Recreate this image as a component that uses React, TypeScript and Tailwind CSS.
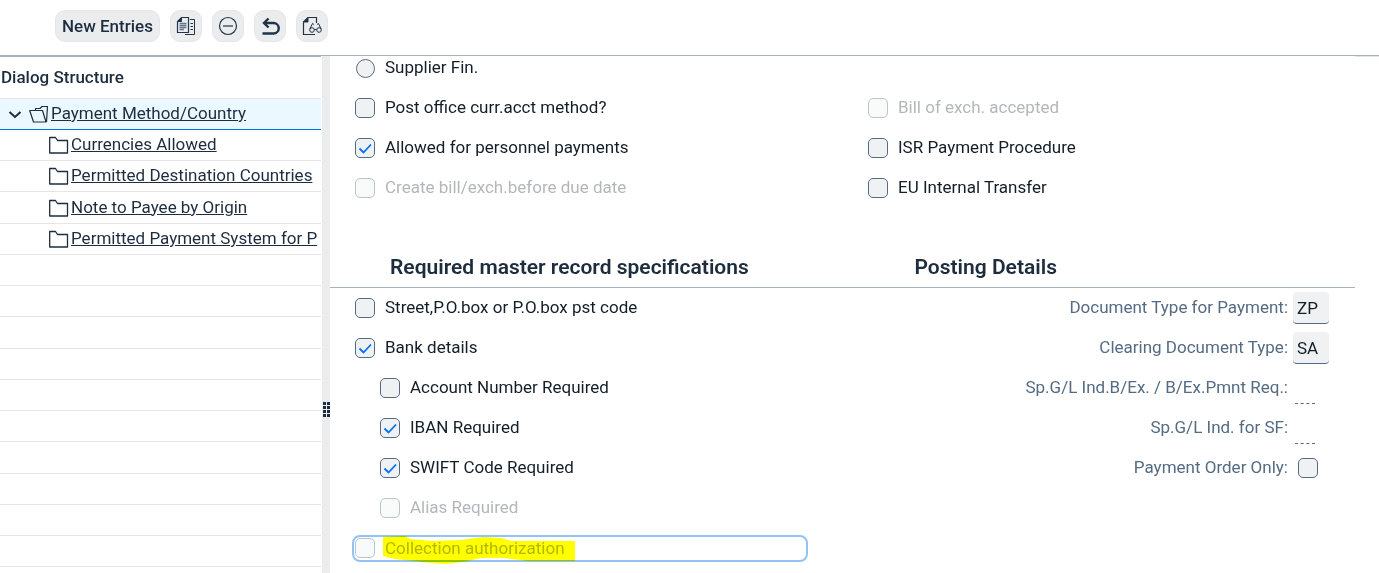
import { type ReactNode } from 'react';
import clsx from 'clsx';

const tree = [
  'Currencies Allowed',
  'Permitted Destination Countries',
  'Note to Payee by Origin',
  'Permitted Payment System for P',
];

// links first, then blank rows down to the bottom of the panel
const rows = Array.from({ length: 14 }, (_, i) => tree[i] ?? '');

type CheckProps = {
  id: string;
  label: string;
  checked?: boolean;
  disabled?: boolean;
  type?: 'checkbox' | 'radio';
};

function Box({ id, checked, disabled, type = 'checkbox' }: Omit<CheckProps, 'label'>) {
  return (
    <span className="grid size-5 shrink-0 place-items-center">
      <input
        id={id}
        type={type}
        defaultChecked={checked}
        disabled={disabled}
        className={clsx(
          'peer col-start-1 row-start-1 appearance-none border border-[#556b82] bg-[#eff1f2] disabled:border-[#bbc4cd] disabled:bg-[#f9fafa]',
          type === 'radio' ? 'size-[19px] rounded-full' : 'size-5 rounded-[5px]'
        )}
      />
      <svg viewBox="0 0 20 20" className="pointer-events-none invisible col-start-1 row-start-1 size-5 peer-checked:visible">
        <path d="M4.500 10.500L8.500 14.500L16 6.500" fill="none" stroke="#0070ff" strokeWidth="1.8" />
      </svg>
    </span>
  );
}

function Check(props: CheckProps) {
  return (
    <div className="flex h-10 items-center gap-[10px]">
      <Box {...props} />
      <label htmlFor={props.id} className={clsx('pb-[2px]', props.disabled ? 'text-[#b3b7bb]' : 'text-[#131e29]')}>
        {props.label}
      </label>
    </div>
  );
}

function ToolButton({ label, children }: { label: string; children: ReactNode }) {
  return (
    <button aria-label={label} className="grid h-8 w-8 place-items-center rounded-[10px] border border-[#e4e6e9] bg-[#eaecee] text-[#223548]">
      {children}
    </button>
  );
}

function Field({ id, label, children }: { id: string; label: string; children: ReactNode }) {
  return (
    <div className="flex h-10 items-center justify-end gap-[5px]">
      <label htmlFor={id} className="pb-[2px] text-[#556b82]">{label}</label>
      <div className="flex w-[62px] items-center">{children}</div>
    </div>
  );
}

function TypeInput({ id, value }: { id: string; value: string }) {
  return (
    <input
      id={id}
      defaultValue={value}
      className="h-8 w-9 rounded-[4px] border-b border-[#556b82] bg-[#eff1f2] px-1 text-[#131e29]"
    />
  );
}

export default function App() {
  return (
    <div className="flex h-screen flex-col overflow-hidden bg-white font-[Roboto,sans-serif] text-[17px] leading-5 text-[#1d2d3e]">
      <header className="flex h-[55px] shrink-0 items-center gap-[10px] pb-[3px] pl-[55px]">
        <button className="h-8 rounded-[10px] border border-[#e4e6e9] bg-[#eaecee] px-[6px] pb-px font-medium">New Entries</button>
        <ToolButton label="Copy">
          <svg viewBox="0 0 20 20" className="size-5" fill="none" stroke="currentColor">
            <path d="M5.500 1.500H12.500V16.500H1.500V5.500Z" strokeWidth="1.200" />
            <path d="M1.500 5.500H5.500V1.500Z" fill="currentColor" />
            <path d="M3.500 7.500H10.500M3.500 9.500H10.500M3.500 11.500H10.500M3.500 13.500H8" stroke="#66788a" strokeWidth="1.400" />
            <path d="M14 3.500H18.500V18.500H9" />
            <path d="M14.500 7.500H17M14.500 10.500H17M14.500 13.500H17" strokeWidth="1.200" />
          </svg>
        </ToolButton>
        <ToolButton label="Delete">
          <svg viewBox="0 0 20 20" className="size-5" fill="none" stroke="currentColor" strokeWidth="1.2">
            <circle cx="10" cy="10" r="8.500" />
            <path d="M5 10H15" />
          </svg>
        </ToolButton>
        <ToolButton label="Undo">
          <svg viewBox="0 0 20 20" className="size-5" fill="none" stroke="currentColor" strokeWidth="2.4">
            <path d="M8.500 2.500L4 7L8.500 11.500M4 7H13.500A5 5 0 0 1 13.500 17.500H2.500" />
          </svg>
        </ToolButton>
        <ToolButton label="Display">
          <svg viewBox="0 0 20 20" className="size-5" fill="none" stroke="currentColor">
            <path d="M14.500 7V1.500H6L1.500 6V18.500H13" strokeWidth="1.200" />
            <path d="M1.500 6H6V1.500Z" fill="currentColor" />
            <circle cx="10" cy="14" r="2.300" />
            <circle cx="17" cy="14" r="2.300" />
            <path d="M7.900 13L10.500 7.500L12 8.500M19.100 13L16.500 7.500L15 8.500M12.300 13.500H14.700" />
          </svg>
        </ToolButton>
      </header>

      <div className="flex min-h-0 flex-1 border-t border-[#a8b3bd]">
        <nav className="w-[321px] shrink-0 overflow-hidden border-t border-[#a8b3bd]">
          <h2 className="flex h-[42px] items-center border-b border-[#e5e5e5] pb-[2px] pl-px font-medium">Dialog Structure</h2>
          <div className="flex h-[31px] items-center border-b border-[#0070f2] bg-[#ebf8ff] pl-2">
            <svg viewBox="0 0 14 14" className="mr-[7px] size-[14px] shrink-0" fill="none" stroke="currentColor" strokeWidth="2">
              <path d="M1.500 5L7 10L12.500 5" />
            </svg>
            <svg viewBox="0 0 20 18" className="mr-[2px] h-[18px] w-5 shrink-0" fill="none" stroke="currentColor" strokeWidth="1.200" strokeLinejoin="round">
              <path d="M.7 5.500H13.500L17 17H4.500Z" />
              <path d="M6.500 5.500V3.500H11L13 1.500H18.500L17.500 17" />
            </svg>
            <a href="#" className="whitespace-nowrap pb-[2px] underline">Payment Method/Country</a>
          </div>
          {rows.map((item, i) => (
            <div
              key={i}
              className={clsx('flex items-center border-b border-[#e5e5e5] pl-[49px]', i % 4 === 2 ? 'h-8' : 'h-[31px]')}
            >
              {item && (
                <>
                  <svg viewBox="0 0 20 18" className="mr-[2px] h-[18px] w-5 shrink-0" fill="none" stroke="currentColor" strokeWidth="1.300" strokeLinejoin="round">
                    <path d="M.7 1.500H6.500L8.500 4.500H18.500V17H.7Z" />
                  </svg>
                  <a href="#" className="whitespace-nowrap pb-[2px] underline">{item}</a>
                </>
              )}
            </div>
          ))}
        </nav>

        <div className="ml-px flex w-2 shrink-0 items-start justify-center bg-[#eaecee] pt-[346px]">
          <div className="grid grid-cols-2 gap-px">
            {Array.from({ length: 8 }, (_, i) => (
              <span key={i} className="size-[3px] bg-[#1d2d3e]" />
            ))}
          </div>
        </div>

        <main className="min-w-0 flex-1 overflow-hidden">
          <div className="-mt-2 grid grid-cols-2 pl-[25px]">
            <div>
              <Check id="supplier" type="radio" label="Supplier Fin." />
              <Check id="post" label="Post office curr.acct method?" />
              <Check id="personnel" label="Allowed for personnel payments" checked />
              <Check id="create" label="Create bill/exch.before due date" disabled />
            </div>
            <div className="pl-[13px] pt-10">
              <Check id="bill" label="Bill of exch. accepted" disabled />
              <Check id="isr" label="ISR Payment Procedure" />
              <Check id="eu" label="EU Internal Transfer" />
            </div>
          </div>

          <div className="mt-10 grid h-10 grid-cols-2 items-center border-b border-[#a8b3bd] pb-[2px] text-[21px] font-semibold">
            <h3 className="pl-[60px]">Required master record specifications</h3>
            <h3 className="pl-[72px]">Posting Details</h3>
          </div>

          <div className="grid grid-cols-2">
            <div className="pl-[25px]">
              <Check id="street" label="Street,P.O.box or P.O.box pst code" />
              <Check id="bank" label="Bank details" checked />
              <div className="pl-[25px]">
                <Check id="account" label="Account Number Required" />
                <Check id="iban" label="IBAN Required" checked />
                <Check id="swift" label="SWIFT Code Required" checked />
                <Check id="alias" label="Alias Required" disabled />
              </div>
              <div className="-ml-[3px] mt-[7px] flex h-[27px] w-[456px] items-center gap-[10px] rounded-lg border-2 border-[#93c2f7] pb-px pl-px">
                <Box id="collection" disabled />
                <label htmlFor="collection" className="relative text-[#b3b7bb]">
                  Collection authorization
                  <svg viewBox="0 0 192 28" preserveAspectRatio="none" className="absolute -left-[2px] -top-[2px] h-7 w-48 mix-blend-multiply">
                    <path d="M0 1L22 0L27 3L50 5L78 4L100 1L118 2L128 5H192V25H145L122 22L98 22L80 26L63 28L48 27L32 25L12 23L0 20Z" fill="#ff0" />
                  </svg>
                </label>
              </div>
            </div>
            <div>
              <Field id="doctype" label="Document Type for Payment:"><TypeInput id="doctype" value="ZP" /></Field>
              <Field id="cleartype" label="Clearing Document Type:"><TypeInput id="cleartype" value="SA" /></Field>
              <Field id="spgl" label="Sp.G/L Ind.B/Ex. / B/Ex.Pmnt Req.:">
                <input id="spgl" readOnly className="ml-[2px] h-8 w-5 border-b border-dashed border-[#556b82]" />
              </Field>
              <Field id="spsf" label="Sp.G/L Ind. for SF:">
                <input id="spsf" readOnly className="ml-[2px] h-8 w-5 border-b border-dashed border-[#556b82]" />
              </Field>
              <Field id="order" label="Payment Order Only:">
                <span className="ml-[5px] flex"><Box id="order" /></span>
              </Field>
            </div>
          </div>
        </main>
        <div className="w-6 shrink-0 border-t border-[#e5e5e5]" />
      </div>
    </div>
  );
}
